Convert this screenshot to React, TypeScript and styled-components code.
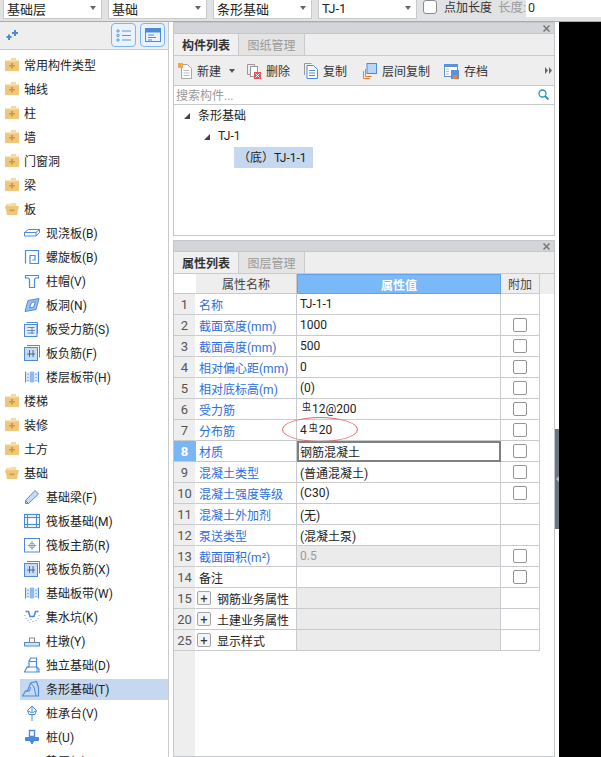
import React from "react";
import styled, { createGlobalStyle } from "styled-components";

const Global = createGlobalStyle`
  html, body { margin: 0; padding: 0; height: 757px; overflow: hidden; background: #fff; }
  * { box-sizing: border-box; }
  body { font-family: Roboto, "Noto Sans CJK SC", sans-serif; font-size: 12px; color: #222; }
`;

const Page = styled.div`display: flex; flex-direction: column; width: 601px; height: 757px; overflow: hidden;`;
const TopBar = styled.div`display: flex; align-items: flex-start; height: 22px; flex: none; padding-left: 3px; gap: 6px; background: #e1e2e4; border-bottom: 1px solid #a9abaf;`;
const Select = styled.div`display: flex; align-items: center; justify-content: space-between; width: 99px; height: 19px; padding: 0 5px 2px 3px; background: #fff; border: 1px solid #c9c9c9; border-top: 0; font-size: 13px; color: #222;`;
const Caret = styled.span`width: 0; height: 0; border-left: 3.5px solid transparent; border-right: 3.5px solid transparent; border-top: 4px solid #666;`;
const TopCheck = styled.span`flex: none; width: 14px; height: 14px; background: #fff; border: 1px solid #8b8b8b; border-radius: 3px;`;
const TopLabel = styled.span`flex: none; line-height: 16px; font-size: 12px; color: #333; margin-left: 1px;`;
const TopMuted = styled.span`flex: none; line-height: 15px; color: #9a9a9a; font-size: 12.5px; margin-right: -6px;`;
const TopInput = styled.div`flex: 1; height: 17px; background: #fff; padding-left: 2px; line-height: 15px; font-size: 12.5px; color: #333;`;

const Main = styled.div`display: flex; flex: 1; min-height: 0;`;
const Side = styled.div`width: 169px; flex: none; display: flex; flex-direction: column; border-right: 1px solid #c8cacd; overflow: hidden;`;
const SideBar = styled.div`display: flex; align-items: center; height: 28px; flex: none; padding: 0 3px 1px 6px; gap: 4px; background: #eee; border-bottom: 1px solid #c8cacd;`;
const SideSpacer = styled.span`flex: 1;`;
const ViewButton = styled.span`display: flex; align-items: center; justify-content: center; width: 25px; height: 24px; border: 1px solid #79b6f3; border-radius: 4px; background: #eaf3fd;`;
const SideList = styled.div`padding-top: 3px; flex: 1;`;
const Row = styled.div<{ $sub?: boolean }>`display: flex; align-items: center; height: 24px; flex: none; padding-left: ${(p) => (p.$sub ? "20px" : "5px")}; gap: 5px; font-size: 12px; color: #222;`;
const RowInner = styled.div<{ $active?: boolean }>`display: flex; align-items: center; flex: 1; height: 21px; padding-left: 4px; gap: 6px; background: ${(p) => (p.$active ? "#c6d8f0" : "transparent")};`;
const RowText = styled.span`padding-bottom: 2px;`;

const Gutter = styled.div`width: 4px; flex: none; background: #fff;`;
const Panels = styled.div`width: 382px; flex: none; display: flex; flex-direction: column; gap: 4px;`;
const Panel = styled.div<{ $grow?: boolean }>`display: flex; flex-direction: column; height: ${(p) => (p.$grow ? "auto" : "214px")}; flex: ${(p) => (p.$grow ? "1" : "none")}; border: 1px solid #c4c6cb; border-top: 0; background: #fff; min-height: 0;`;
const TitleBar = styled.div`display: flex; align-items: center; justify-content: flex-end; height: 12px; flex: none; padding-right: 4px; background: #d3d5d9; border-top: 1px solid #c4c6cb; border-bottom: 1px solid #c4c6cb;`;
const Tabs = styled.div`display: flex; height: 22px; flex: none; background: #eee; border-bottom: 1px solid #c8cacd;`;
const Tab = styled.div<{ $active?: boolean }>`display: flex; align-items: center; justify-content: center; width: ${(p) => (p.$active ? "65px" : "66px")}; font-weight: ${(p) => (p.$active ? 700 : 400)}; color: ${(p) => (p.$active ? "#333" : "#9a9a9a")}; background: ${(p) => (p.$active ? "#f0f0f0" : "#e4e4e4")}; border-right: 1px solid #c8cacd;`;
const Toolbar = styled.div`display: flex; align-items: center; height: 30px; flex: none; padding: 0 2px 0 4px; background: #eee; border-bottom: 1px solid #c8cacd;`;
const Tool = styled.div<{ $ml?: number }>`display: flex; align-items: center; gap: 5px; margin-left: ${(p) => p.$ml ?? 0}px; color: #333;`;
const ToolCaret = styled.span`width: 0; height: 0; margin-left: 3px; border-left: 3px solid transparent; border-right: 3px solid transparent; border-top: 4px solid #555;`;
const More = styled.span`margin-left: auto; display: flex;`;
const Search = styled.div`display: flex; align-items: center; justify-content: space-between; height: 19px; flex: none; padding: 0 5px 2px 2px; border-bottom: 1px solid #c8cacd; color: #9a9a9a;`;
const Tree = styled.div`flex: 1;`;
const TreeRow = styled.div<{ $indent: number }>`display: flex; align-items: center; height: 21px; padding-left: ${(p) => p.$indent}px; gap: 8px; color: #222;`;
const TreeText = styled.span`padding-bottom: 2px;`;
const TreeMark = styled.span`width: 0; height: 0; border-bottom: 6px solid #444; border-left: 6px solid transparent;`;
const TreeSelected = styled.span`display: flex; align-items: center; height: 21px; width: 79px; padding: 0 0 2px 4px; background: #c6d8f0; white-space: nowrap;`;

const Sheet = styled.div`position: relative; flex: 1; display: flex; flex-direction: column; min-height: 0;`;
const Line = styled.div<{ $head?: boolean }>`display: grid; grid-template-columns: 22px 101px 204px 39px; height: ${(p) => (p.$head ? "20px" : "21px")}; flex: none; background: ${(p) => (p.$head ? "#eee" : "#fff")};`;
const Cell = styled.div`display: flex; align-items: center; min-width: 0; border-right: 1px solid #c8cacd; border-bottom: 1px solid #c8cacd;`;
const IndexCell = styled(Cell)<{ $on?: boolean; $head?: boolean }>`justify-content: center; font-size: 13px; color: ${(p) => (p.$on ? "#fff" : "#555")}; font-weight: ${(p) => (p.$on ? 700 : 400)}; background: ${(p) => (p.$head ? "#fff" : p.$on ? "#79b6f3" : "#eee")}; border-right-color: ${(p) => (p.$on ? "#79b6f3" : "#fff")};`;
const NameCell = styled(Cell)<{ $dark?: boolean }>`padding-left: 3px; white-space: nowrap; color: ${(p) => (p.$dark ? "#222" : "#2c6fdc")};`;
const ValueCell = styled(Cell)<{ $fill?: boolean; $muted?: boolean; $selected?: boolean }>`padding-left: ${(p) => (p.$selected ? "1px" : "3px")}; white-space: nowrap; color: ${(p) => (p.$muted ? "#9a9a9a" : "#222")}; background: ${(p) => (p.$fill ? "#ebebeb" : "#fff")}; ${(p) => (p.$selected ? "border: 2px solid #808080;" : "")}`;
const HeadCell = styled(Cell)`justify-content: center; color: #444; background: #eee;`;
const HeadValue = styled(Cell)`justify-content: center; font-weight: 700; color: #fff; background: #7ab8f7; border: 1px solid #5fa3ec;`;
const AddCell = styled(Cell)`justify-content: center;`;
const Check = styled.span`width: 14px; height: 14px; border: 1px solid #959595; border-radius: 2px; background: #fff;`;
const Expand = styled.span`display: flex; align-items: center; justify-content: center; flex: none; width: 14px; height: 14px; margin: 0 6px 0 -2px; border: 1px solid #a5a5a5; border-radius: 2px; background: #f4f4f4; font-size: 13px; line-height: 1; color: #333;`;
const Rebar = styled.span`display: inline-block; font-size: 9px; line-height: 9px; vertical-align: 3px; margin: 0 1px 0 2px;`;
const Filler = styled.div`width: 21px; flex: 1; background: #eee;`;
const Mark = styled.div`position: absolute; left: 108px; top: 143px; width: 76px; height: 25px; border: 1px solid #e2686c; border-radius: 50%; pointer-events: none;`;

const Splitter = styled.div`width: 4px; flex: none; background: #fff; display: flex; flex-direction: column;`;
const SplitSpace = styled.div`height: 407px; flex: none;`;
const SplitHandle = styled.div`height: 100px; flex: none; background: #6b7480; display: flex; align-items: center; justify-content: center;`;
const SplitArrow = styled.span`width: 0; height: 0; border-top: 3px solid transparent; border-bottom: 3px solid transparent; border-right: 3px solid #b8bcc2;`;
const Black = styled.div`flex: 1; background: #000;`;

const B = "#4a8bdc";
const Ico = styled.svg`flex: none; display: block;`;
const WideIco = styled(Ico)`margin: 0 0 0 -2px;`;
const Sv: React.FC<{ children: React.ReactNode }> = ({ children }) => (
  <Ico width={16} height={16} viewBox="0 0 16 16" fill="none" stroke={B} strokeWidth="1">{children}</Ico>
);

const Folder: React.FC<{ open?: boolean }> = ({ open }) => (
  <Ico width="14" height="14" viewBox="0 0 14 14">
    {open ? (
      <>
        <path d="M1 2h4l1-1h5v3H1z" fill="#f5dca6" />
        <path d="M0 4h14l-2 9H2z" fill="#eec67c" />
        <rect x="4.500" y="7.500" width="5" height="1.600" fill="#cf9a45" />
      </>
    ) : (
      <>
        <path d="M6 0h5v2H6z" fill="#f3d9a2" />
        <rect x="0" y="2" width="14" height="11" fill="#eec67c" />
        <rect x="0" y="2" width="14" height="1.500" fill="#f6e2b6" />
        <path d="M6 5h2v2h2v1.600H8v2H6v-2H4V7h2z" fill="#cf9a45" />
      </>
    )}
  </Ico>
);

const icons: Record<string, React.ReactNode> = {
  slab: <Sv><path d="M.5 7.500l4-3h11v3l-3.500 3.500H.5zM.5 7.500h11.500v3.500M12 7.500l3.500-3" /></Sv>,
  spiral: <Sv><path d="M1.500 14.500v-13h13v13H6v-8h5v4.500H8.500" strokeWidth="1.200" /></Sv>,
  cap: <Sv><path d="M1.500 2.500h13v2.500h-3l-1 1.500v8h-5v-8l-1-1.500h-3z" strokeWidth="1.200" /></Sv>,
  hole: <Sv><path d="M1 14.500l3-11 11-2-3 11z" fill="#9dbfee" /><path d="M5.500 11l2-5.500 4-.8-2 5.500z" fill="#fff" /></Sv>,
  rebar: <Sv><path d="M2.500 1.500h11v11" /><rect x=".5" y="3.500" width="12.500" height="12" fill="#e4eefb" /><path d="M3.500 6.500h7M3.500 12h7M8 6v7M3 9.500h8" strokeWidth=".9" stroke="#5a7da8" /></Sv>,
  neg: <Sv><path d="M3 .5h12.500v12" /><rect x=".5" y="2.500" width="13" height="13" fill="#c9dcf5" /><path d="M5.500 5v7M9 5v7M3 9h8" stroke="#44688f" /></Sv>,
  band: <Sv><rect x="1" y="3" width="14" height="10" fill="#dbe8f9" stroke="none" /><path d="M1.500 2.500v11M7 2.500v11M9 2.500v11M14.500 2.500v11" /><path d="M4 5v1M4 8v1M4 11v1M12 5v1M12 8v1M12 11v1" /></Sv>,
  beam: <Sv><path d="M1.500 11.500l9.500-10 3.500 3.500-10 9.500h-3z" fill="#c9dcf5" /><path d="M1.500 11.500l3 3" /></Sv>,
  raft: <Sv><rect x=".5" y="1.500" width="15" height="13" strokeWidth="1.200" /><rect x="3.500" y="4.500" width="9" height="7" strokeWidth="1.200" /><path d="M.5 4.500h15M.5 11.500h15M3.500 1.500v13M12.500 1.500v13" /></Sv>,
  main: <Sv><rect x=".5" y="1.500" width="15" height="13.500" /><path d="M8 4v9M3.500 8.500h9" stroke="#8b9aaa" /><circle cx="8" cy="8.500" r="2.500" stroke="#8b9aaa" /></Sv>,
  pit: <Sv><path d="M1.500 2.500h3l1.500 5h4l1.500-5h3" strokeWidth="1.500" /><path d="M1 6v1M2 9v1M4 11v1M7 10v1M9 12v1M12 11v1M14 9v1M15 6v1M6 13v1" stroke="#8fa7c4" /></Sv>,
  pier: <Sv><rect x=".5" y="9.500" width="15" height="3.500" fill="#d4e3f7" /><rect x="5.500" y="5" width="5" height="4.500" stroke="#7f8a96" /></Sv>,
  iso: <Sv><path d="M.5 15l2.500-5h2v-6l2-3h5.500v9l2.500 2v3z" strokeWidth="1.200" /><path d="M5 4.500h7.500v6M3 10h10v5" /></Sv>,
  strip: <WideIco width={18} height={16} viewBox="0 0 18 16" fill="none" stroke={B}><path d="M.5 15l3-5h2l3-8 6-1.500 2 6v8.500z" strokeWidth="1.200" /><path d="M8.500 2l3.500 4 2 9M3.500 10h4l1-4" /></WideIco>,
  pile: <Sv><path d="M8 1l4.500 4.500L11 9.500H5L3.500 5.500zM8 1v6M3.500 5.500L8 8l4.500-2.500M8 9.500V16" /></Sv>,
  pileU: <Sv><path d="M5.500 1.500h5v6h-5z" strokeWidth="1.400" /><path d="M1.500 8.500h13v3h-13zM6 11.500h4L8 15z" fill={B} /></Sv>,
  pad: <Sv><path d="M1 14C2 9 14 9 15 14" /><path d="M1 15h14" /></Sv>,
};

const sideRows: { t: string; i?: string; open?: boolean; active?: boolean }[] = [
  { t: "常用构件类型" }, { t: "轴线" }, { t: "柱" }, { t: "墙" }, { t: "门窗洞" }, { t: "梁" },
  { t: "板", open: true },
  { t: "现浇板(B)", i: "slab" }, { t: "螺旋板(B)", i: "spiral" }, { t: "柱帽(V)", i: "cap" }, { t: "板洞(N)", i: "hole" },
  { t: "板受力筋(S)", i: "rebar" }, { t: "板负筋(F)", i: "neg" }, { t: "楼层板带(H)", i: "band" },
  { t: "楼梯" }, { t: "装修" }, { t: "土方" },
  { t: "基础", open: true },
  { t: "基础梁(F)", i: "beam" }, { t: "筏板基础(M)", i: "raft" }, { t: "筏板主筋(R)", i: "main" }, { t: "筏板负筋(X)", i: "neg" },
  { t: "基础板带(W)", i: "band" }, { t: "集水坑(K)", i: "pit" }, { t: "柱墩(Y)", i: "pier" }, { t: "独立基础(D)", i: "iso" },
  { t: "条形基础(T)", i: "strip", active: true }, { t: "桩承台(V)", i: "pile" }, { t: "桩(U)", i: "pileU" }, { t: "垫层(X)", i: "pad" },
];

type R = { n: number; name: string; value?: React.ReactNode; check?: boolean; fill?: boolean; muted?: boolean; dark?: boolean; group?: boolean; selected?: boolean };
const rows: R[] = [
  { n: 1, name: "名称", value: "TJ-1-1" },
  { n: 2, name: "截面宽度(mm)", value: "1000", check: true },
  { n: 3, name: "截面高度(mm)", value: "500", check: true },
  { n: 4, name: "相对偏心距(mm)", value: "0", check: true },
  { n: 5, name: "相对底标高(m)", value: "(0)", check: true },
  { n: 6, name: "受力筋", value: <span><Rebar>虫</Rebar>12@200</span>, check: true },
  { n: 7, name: "分布筋", value: <span>4<Rebar>虫</Rebar>20</span>, check: true },
  { n: 8, name: "材质", value: "钢筋混凝土", check: true, selected: true },
  { n: 9, name: "混凝土类型", value: "(普通混凝土)", check: true },
  { n: 10, name: "混凝土强度等级", value: "(C30)", check: true },
  { n: 11, name: "混凝土外加剂", value: "(无)" },
  { n: 12, name: "泵送类型", value: "(混凝土泵)" },
  { n: 13, name: "截面面积(m²)", value: "0.5", check: true, fill: true, muted: true },
  { n: 14, name: "备注", check: true, dark: true },
  { n: 15, name: "钢筋业务属性", fill: true, dark: true, group: true },
  { n: 20, name: "土建业务属性", fill: true, dark: true, group: true },
  { n: 25, name: "显示样式", fill: true, dark: true, group: true },
];

const CloseX = () => (
  <Ico width="7" height="7" viewBox="0 0 7 7"><path d="M.5.5l6 6M6.500.5l-6 6" stroke="#777" strokeWidth="1.500" /></Ico>
);

export default function App() {
  return (
    <Page>
      <Global />
      <TopBar>
        {["基础层", "基础", "条形基础", "TJ-1"].map((s) => (
          <Select key={s}>{s}<Caret /></Select>
        ))}
        <TopCheck />
        <TopLabel>点加长度</TopLabel>
        <TopMuted>长度:</TopMuted>
        <TopInput>0</TopInput>
      </TopBar>
      <Main>
        <Side>
          <SideBar>
            <Ico width="12" height="10" viewBox="0 0 12 10">
              <path d="M2 4.500h2v1.500h1.500v2H4v2H2V8H.500V6H2zM8 0h2v2h2v2h-2v2H8V4H6V2h2z" fill="#4a8bdc" />
            </Ico>
            <SideSpacer />
            <ViewButton>
              <Sv>
                <path d="M1 3h2v2H1zM1 7.500h2v2H1zM1 12h2v2H1z" strokeWidth=".8" />
                <path d="M6 4h9M6 8.500h9M6 13h9" stroke="#6b93c6" />
              </Sv>
            </ViewButton>
            <ViewButton>
              <Sv>
                <rect x=".5" y="1.500" width="15" height="13" />
                <path d="M1 2h14v3.500H1z" fill="#4a8bdc" stroke="none" />
                <path d="M3 8h6M3 10.500h8M3 13h4" />
              </Sv>
            </ViewButton>
          </SideBar>
          <SideList>
            {sideRows.map((r) =>
              r.i ? (
                <Row key={r.t} $sub>
                  <RowInner $active={r.active}>{icons[r.i]}<RowText>{r.t}</RowText></RowInner>
                </Row>
              ) : (
                <Row key={r.t}><Folder open={r.open} /><RowText>{r.t}</RowText></Row>
              )
            )}
          </SideList>
        </Side>
        <Gutter />
        <Panels>
          <Panel>
            <TitleBar><CloseX /></TitleBar>
            <Tabs><Tab $active>构件列表</Tab><Tab>图纸管理</Tab></Tabs>
            <Toolbar>
              <Tool>
                <Ico width="14" height="16" viewBox="0 0 14 16">
                  <path d="M3.500 1.500h6l4 4v10h-10z" fill="#fff" stroke="#a8a8a8" />
                  <path d="M5.500 7.500h6M5.500 10h6M5.500 12.500h6" stroke="#bbb" />
                  <rect x="0" y="0" width="5" height="5" fill="#f5a64a" />
                </Ico>
                新建<ToolCaret />
              </Tool>
              <Tool $ml={12}>
                <Ico width="14" height="16" viewBox="0 0 14 16">
                  <path d="M.5 1.500h7v2M.5 1.500v10h3" stroke="#999" fill="none" />
                  <rect x="3.500" y="3.500" width="7" height="10" fill="#fff" stroke="#999" />
                  <rect x="7" y="9" width="7" height="7" fill="#e2545a" />
                  <path d="M8.500 10.500l4 4M12.500 10.500l-4 4" stroke="#fff" />
                </Ico>
                删除
              </Tool>
              <Tool $ml={14}>
                <Ico width="14" height="16" viewBox="0 0 14 16">
                  <path d="M.5 12V.5h7" stroke="#999" fill="none" />
                  <path d="M3 2.500h6.500l4 4v9H3z" fill="#fff" stroke="#4a8bdc" />
                  <path d="M5 7.500h6M5 10h6M5 12.500h6" stroke="#4a8bdc" />
                </Ico>
                复制
              </Tool>
              <Tool $ml={16}>
                <Ico width="14" height="16" viewBox="0 0 14 16">
                  <rect x="4" y="0.500" width="9.500" height="10" fill="#b8d6f8" stroke="#4a8bdc" />
                  <path d="M2.500 6v7.500h6M.5 8v7.500h6" stroke="#f08030" fill="none" />
                </Ico>
                层间复制
              </Tool>
              <Tool $ml={14}>
                <Ico width="15" height="16" viewBox="0 0 15 16">
                  <rect x=".5" y="1.500" width="13" height="12" fill="#fff" stroke="#5d93d6" />
                  <rect x="0" y="1" width="14" height="3" fill="#5d93d6" />
                  <path d="M2 6h3M2 8.500h3M2 11h3" stroke="#a6c2e6" />
                  <rect x="7" y="7" width="8" height="9" fill="#5d93d6" />
                  <rect x="9" y="12" width="4" height="4" fill="#f08030" />
                </Ico>
                存档
              </Tool>
              <More>
                <Ico width="7" height="7" viewBox="0 0 7 7"><path d="M0 0l3 3.500L0 7zM4 0l3 3.500L4 7z" fill="#666" /></Ico>
              </More>
            </Toolbar>
            <Search>
              搜索构件...
              <Ico width="11" height="11" viewBox="0 0 11 11"><circle cx="4.500" cy="4.500" r="3.500" fill="none" stroke="#2f8fc4" strokeWidth="1.300" /><path d="M7 7l3.500 3.500" stroke="#2f8fc4" strokeWidth="1.800" /></Ico>
            </Search>
            <Tree>
              <TreeRow $indent={10}><TreeMark /><TreeText>条形基础</TreeText></TreeRow>
              <TreeRow $indent={30}><TreeMark /><TreeText>TJ-1</TreeText></TreeRow>
              <TreeRow $indent={60}><TreeSelected>（底）TJ-1-1</TreeSelected></TreeRow>
            </Tree>
          </Panel>
          <Panel $grow>
            <TitleBar><CloseX /></TitleBar>
            <Tabs><Tab $active>属性列表</Tab><Tab>图层管理</Tab></Tabs>
            <Sheet>
              <Line $head>
                <IndexCell $head />
                <HeadCell>属性名称</HeadCell>
                <HeadValue>属性值</HeadValue>
                <HeadCell>附加</HeadCell>
              </Line>
              {rows.map((r) => (
                <Line key={r.n}>
                  <IndexCell $on={r.selected}>{r.n}</IndexCell>
                  <NameCell $dark={r.dark}>
                    {r.group ? <><Expand>+</Expand><span>{r.name}</span></> : r.name}
                  </NameCell>
                  <ValueCell $fill={r.fill} $muted={r.muted} $selected={r.selected}>{r.value}</ValueCell>
                  <AddCell>{r.check ? <Check /> : null}</AddCell>
                </Line>
              ))}
              <Filler />
              <Mark />
            </Sheet>
          </Panel>
        </Panels>
        <Splitter>
          <SplitSpace />
          <SplitHandle><SplitArrow /></SplitHandle>
        </Splitter>
        <Black />
      </Main>
    </Page>
  );
}
